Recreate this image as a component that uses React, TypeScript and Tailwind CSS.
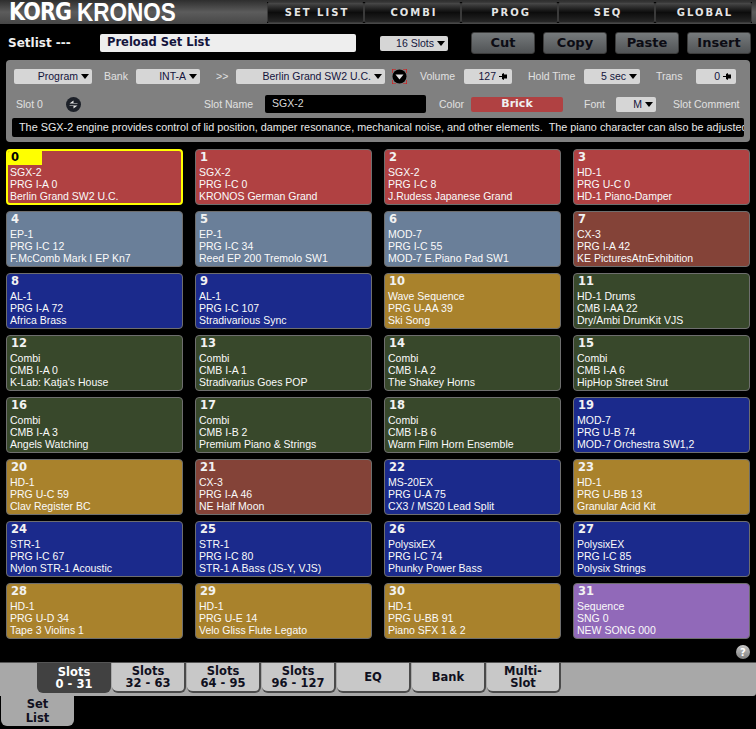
const BRICK = "bg-[#b04142]";
const STEEL = "bg-[#6a7f99]";
const NAVY = "bg-[#1b2a8c]";
const GOLD = "bg-[#a9822c]";
const OLIVE = "bg-[#38482b]";
const RUST = "bg-[#844338]";
const PURPLE = "bg-[#9169b9]";

const slots: [string, string, string, string][] = [
  ["SGX-2", "PRG I-A 0", "Berlin Grand SW2 U.C.", BRICK],
  ["SGX-2", "PRG I-C 0", "KRONOS German Grand", BRICK],
  ["SGX-2", "PRG I-C 8", "J.Rudess Japanese Grand", BRICK],
  ["HD-1", "PRG U-C 0", "HD-1 Piano-Damper", BRICK],
  ["EP-1", "PRG I-C 12", "F.McComb Mark I EP Kn7", STEEL],
  ["EP-1", "PRG I-C 34", "Reed EP 200 Tremolo SW1", STEEL],
  ["MOD-7", "PRG I-C 55", "MOD-7 E.Piano Pad SW1", STEEL],
  ["CX-3", "PRG I-A 42", "KE PicturesAtnExhibition", RUST],
  ["AL-1", "PRG I-A 72", "Africa Brass", NAVY],
  ["AL-1", "PRG I-C 107", "Stradivarious Sync", NAVY],
  ["Wave Sequence", "PRG U-AA 39", "Ski Song", GOLD],
  ["HD-1 Drums", "CMB I-AA 22", "Dry/Ambi DrumKit VJS", OLIVE],
  ["Combi", "CMB I-A 0", "K-Lab: Katja's House", OLIVE],
  ["Combi", "CMB I-A 1", "Stradivarius Goes POP", OLIVE],
  ["Combi", "CMB I-A 2", "The Shakey Horns", OLIVE],
  ["Combi", "CMB I-A 6", "HipHop Street Strut", OLIVE],
  ["Combi", "CMB I-A 3", "Angels Watching", OLIVE],
  ["Combi", "CMB I-B 2", "Premium Piano & Strings", OLIVE],
  ["Combi", "CMB I-B 6", "Warm Film Horn Ensemble", OLIVE],
  ["MOD-7", "PRG U-B 74", "MOD-7 Orchestra SW1,2", NAVY],
  ["HD-1", "PRG U-C 59", "Clav Register BC", GOLD],
  ["CX-3", "PRG I-A 46", "NE Half Moon", RUST],
  ["MS-20EX", "PRG U-A 75", "CX3 / MS20 Lead Split", NAVY],
  ["HD-1", "PRG U-BB 13", "Granular Acid Kit", GOLD],
  ["STR-1", "PRG I-C 67", "Nylon STR-1 Acoustic", NAVY],
  ["STR-1", "PRG I-C 80", "STR-1 A.Bass (JS-Y, VJS)", NAVY],
  ["PolysixEX", "PRG I-C 74", "Phunky Power Bass", NAVY],
  ["PolysixEX", "PRG I-C 85", "Polysix Strings", NAVY],
  ["HD-1", "PRG U-D 34", "Tape 3 Violins 1", GOLD],
  ["HD-1", "PRG U-E 14", "Velo Gliss Flute Legato", GOLD],
  ["HD-1", "PRG U-BB 91", "Piano SFX 1 & 2", GOLD],
  ["Sequence", "SNG 0", "NEW SONG 000", PURPLE],
];

const arial = "font-['Liberation_Sans',Arial,sans-serif]";
const verdana = "font-['DejaVu_Sans',Verdana,sans-serif]";

function Caret() {
  return (
    <span className="mx-[3px] h-0 w-0 shrink-0 border-x-[4px] border-t-[5px] border-x-transparent border-t-black" />
  );
}

function Spin() {
  return (
    <svg width="10" height="7" viewBox="0 0 10 7" className="mx-[3px] shrink-0">
      <path d="M0 3h3V1l2-1v7L3 6V4H0z" fill="#000" />
      <rect x="5" y="1.5" width="3" height="4" fill="#000" />
    </svg>
  );
}

function Drop({ w, label, spin }: { w: string; label: string; spin?: boolean }) {
  return (
    <div className={`flex h-[15px] shrink-0 items-center justify-end rounded-[2px] bg-[#d6d6d6] text-[10.5px] text-[#14143c] ${w}`}>
      <span className="leading-none whitespace-nowrap">{label}</span>
      {spin ? <Spin /> : <Caret />}
    </div>
  );
}

function Label({ w, children }: { w: string; children: string }) {
  return <span className={`shrink-0 text-[10.5px] leading-none whitespace-nowrap text-[#e0e0e0] ${w}`}>{children}</span>;
}

function ActionButton({ label }: { label: string }) {
  return (
    <button className={`h-[22px] w-[64px] rounded-[3px] border border-[#3c3c3c] bg-gradient-to-b from-[#767a7c] to-[#515456] text-[13px] font-bold text-[#0c0c14] ${verdana}`}>
      {label}
    </button>
  );
}

function ModeTab({ label }: { label: string }) {
  return (
    <div className={`flex h-[21px] w-[97px] items-center justify-center rounded-[2px] border border-[#3a3a3a] bg-gradient-to-b from-[#4a4a4a] via-[#0c0c0c] to-[#262626] pl-[3px] text-[10px] font-bold tracking-[2px] text-[#e4e4e4] ${verdana}`}>
      {label}
    </div>
  );
}

function SlotCard({ n, data }: { n: number; data: [string, string, string, string] }) {
  const [engine, bank, name, color] = data;
  const selected = n === 0;
  return (
    <div
      className={`relative h-[56px] overflow-hidden rounded-[4px] ${color} ${
        selected ? "border-2 border-[#ffff00] px-[2px]" : "border border-[#6e6e6e] px-[3px]"
      }`}
    >
      {selected && <div className="absolute top-0 left-0 h-[14px] w-[34px] bg-[#ffff00]" />}
      <div className={`relative ml-[1px] h-[14px] text-[11.5px] leading-[14px] font-bold ${verdana} ${selected ? "-mt-[1px] text-black" : "text-[#f2f2f2]"}`}>
        {n}
      </div>
      <div className={`mt-[2px] text-[10.5px] leading-[12px] text-[#fafafa] ${arial}`}>
        <div>{engine}</div>
        <div>{bank}</div>
        <div className="whitespace-nowrap">{name}</div>
      </div>
    </div>
  );
}

function BottomTab({ label, active }: { label: string[]; active?: boolean }) {
  return (
    <div
      className={`flex h-[30px] w-[74px] flex-col items-center justify-center rounded-b-[6px] text-[11.5px] leading-[12px] font-bold ${verdana} ${
        active ? "bg-[#414141] text-white" : "border-r-2 border-b-2 border-[#4a4a4a] bg-[#c8c8c8] text-[#101020]"
      }`}
    >
      {label.map((l) => (
        <span key={l}>{l}</span>
      ))}
    </div>
  );
}

export default function App() {
  return (
    <div className="h-[729px] w-[756px] overflow-hidden bg-black">
      {/* title bar */}
      <div className="flex h-[24px] items-start bg-gradient-to-b from-[#2e2e2e] via-[#5c5c5c] to-[#474747] pl-[9px]">
        <div className="flex h-[24px] w-[258px] items-start whitespace-nowrap text-white">
          <span className={`origin-left scale-x-[0.86] text-[24px] leading-[25px] font-bold tracking-[-1px] ${verdana}`}>KORG</span>
          <span className={`-ml-[4px] origin-left scale-x-[0.9] text-[25px] leading-[25px] font-bold ${arial}`}>KRONOS</span>
        </div>
        <div className="mt-[2px] flex bg-black">
          {["SET LIST", "COMBI", "PROG", "SEQ", "GLOBAL"].map((t) => (
            <ModeTab key={t} label={t} />
          ))}
        </div>
      </div>

      {/* set list name + edit buttons */}
      <div className="flex h-[36px] items-center pt-[2px] pl-[8px]">
        <span className={`w-[92px] text-[12px] font-bold text-[#f0f0f0] ${verdana}`}>Setlist ---</span>
        <div className={`flex h-[18px] w-[256px] items-center rounded-[2px] bg-[#eeeeee] pl-[7px] text-[11.5px] font-bold text-[#14143c] ${verdana}`}>
          Preload Set List
        </div>
        <div className={`ml-[24px] ${arial}`}>
          <Drop w="w-[68px]" label="16 Slots" />
        </div>
        <div className="ml-[23px] flex gap-[8px]">
          {["Cut", "Copy", "Paste", "Insert"].map((b) => (
            <ActionButton key={b} label={b} />
          ))}
        </div>
      </div>

      {/* slot editor */}
      <div className={`mx-[6px] h-[82px] rounded-[4px] bg-[#808080] px-[6px] ${arial}`}>
        <div className="flex h-[33px] items-center pl-[2px]">
          <Drop w="w-[78px]" label="Program" />
          <Label w="ml-[12px] w-[32px]">Bank</Label>
          <Drop w="w-[64px]" label="INT-A" />
          <Label w="ml-[16px] w-[20px]">&gt;&gt;</Label>
          <Drop w="w-[149px]" label="Berlin Grand SW2 U.C." />
          <svg width="15" height="15" viewBox="0 0 15 15" className="ml-[7px] shrink-0">
            <circle cx="7.5" cy="7.5" r="7" fill="#000" />
            <path d="M3.5 5.5h8l-4 5z" fill="#e0e0e0" />
            <path d="M0 4V0h4M11 0h4v4M15 11v4h-4M4 15H0v-4" fill="none" stroke="#e01010" strokeWidth="1.2" />
          </svg>
          <Label w="ml-[13px] w-[44px]">Volume</Label>
          <Drop w="w-[48px]" label="127" spin />
          <Label w="ml-[16px] w-[56px]">Hold Time</Label>
          <Drop w="w-[56px]" label="5 sec" />
          <Label w="ml-[16px] w-[40px]">Trans</Label>
          <Drop w="w-[40px]" label="0" spin />
        </div>
        <div className="flex h-[22px] items-center pl-[4px]">
          <Label w="w-[50px]">Slot 0</Label>
          <svg width="15" height="15" viewBox="0 0 15 15" className="shrink-0">
            <circle cx="7.5" cy="7.5" r="7.5" fill="#1c2028" />
            <path d="M3.5 6.5h8V6H7.5V3.5zM3.5 8.5h8L7.5 11.5V9H3.5z" fill="#e8e8e8" />
          </svg>
          <Label w="ml-[123px] w-[61px]">Slot Name</Label>
          <div className="flex h-[18px] w-[161px] shrink-0 items-center rounded-[2px] bg-black pl-[7px] text-[10.5px] text-[#d8d8d8]">SGX-2</div>
          <Label w="ml-[13px] w-[32px]">Color</Label>
          <div className={`flex h-[15px] w-[92px] shrink-0 items-center justify-center rounded-[2px] bg-[#b04142] pt-[1px] text-[11px] font-bold text-[#f0f0f0] ${verdana}`}>Brick</div>
          <Label w="ml-[21px] w-[32px]">Font</Label>
          <Drop w="w-[40px]" label="M" />
          <Label w="ml-[17px] w-[65px]">Slot Comment</Label>
        </div>
        <div className="mt-[3px] h-[19px] overflow-hidden rounded-[2px] bg-black pl-[7px] text-[10.85px] leading-[18px] whitespace-nowrap text-[#e8e8e8]">
          The SGX-2 engine provides control of lid position, damper resonance, mechanical noise, and other elements.&nbsp; The piano character can also be adjusted
        </div>
      </div>

      {/* slot grid */}
      <div className="mt-[7px] grid grid-cols-4 gap-x-[12px] gap-y-[6px] px-[6px]">
        {slots.map((s, i) => (
          <SlotCard key={i} n={i} data={s} />
        ))}
      </div>

      <div className="flex h-[23px] items-center justify-end pt-[3px] pr-[6px]">
        <div className={`flex h-[14px] w-[14px] items-center justify-center rounded-full bg-gradient-to-b from-[#c8c8c8] to-[#808080] text-[10px] font-bold text-white ${verdana}`}>?</div>
      </div>

      {/* bottom tabs */}
      <div className="flex h-[34px] items-start gap-[1px] rounded-br-[3px] border-t border-[#555] bg-[#a8a8a8] pl-[37px]">
        <BottomTab label={["Slots", "0 - 31"]} active />
        <BottomTab label={["Slots", "32 - 63"]} />
        <BottomTab label={["Slots", "64 - 95"]} />
        <BottomTab label={["Slots", "96 - 127"]} />
        <BottomTab label={["EQ"]} />
        <BottomTab label={["Bank"]} />
        <BottomTab label={["Multi-", "Slot"]} />
      </div>
      <div className={`ml-[1px] flex h-[30px] w-[73px] flex-col items-center justify-center rounded-b-[6px] bg-[#a8a8a8] text-[11.5px] leading-[14px] font-bold text-[#101020] ${verdana}`}>
        <span>Set</span>
        <span>List</span>
      </div>
    </div>
  );
}
